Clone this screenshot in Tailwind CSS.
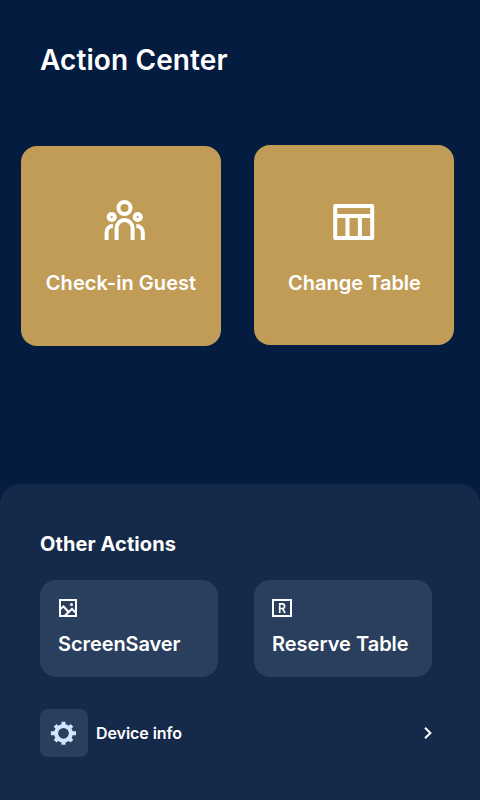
<!DOCTYPE html>
<html lang="en">
<head>
<meta charset="utf-8">
<title>Action Center</title>
<script src="https://cdn.jsdelivr.net/npm/@tailwindcss/browser@4"></script>
</head>
<body class="bg-[#031c40] font-['Inter',sans-serif] text-white">
<main class="flex h-[800px] w-[480px] flex-col overflow-hidden">
  <h1 class="mt-[43px] ml-10 text-[28px] leading-[34px] font-semibold tracking-[0.1px] whitespace-nowrap">Action Center</h1>
  <div class="mt-[68px] flex items-start gap-[33px] pl-[21px]">
    <button class="mt-px flex size-[200px] flex-col items-center rounded-2xl bg-[#c19c57] pt-[54px]">
      <svg class="ml-[7px] h-10 w-[41px]" viewBox="0 0 41 40" fill="none" stroke="#fff" stroke-width="4">
        <circle cx="20.5" cy="8" r="6"/><circle cx="7.7" cy="17" r="3.1"/><circle cx="33.7" cy="17" r="3.1"/>
        <path d="M12.6 40V28a8 8 0 0 1 16 0v12M2.6 40v-7.5c0-3.8 2.6-6.5 6.3-6.5M38.8 40v-7.5c0-3.8-2.8-6.5-6.5-6.5"/>
      </svg>
      <span class="mt-[31px] text-xl leading-6 font-semibold tracking-[0.05px] whitespace-nowrap">Check-in Guest</span>
    </button>
    <button class="flex size-[200px] flex-col items-center rounded-2xl bg-[#c19c57] pt-[59px]">
      <svg class="h-9 w-[42px]" viewBox="0 0 42 36" fill="none" stroke="#fff" stroke-width="4" stroke-linejoin="round">
        <path d="M2.2 2h37v32h-37zM2 12h37M14.5 12v22M26.9 12v22"/>
      </svg>
      <span class="mt-[31px] ml-px text-xl leading-6 font-semibold whitespace-nowrap">Change Table</span>
    </button>
  </div>
  <section class="mt-[138px] flex flex-1 flex-col rounded-t-[20px] bg-[#152a4a] px-10 pt-12">
    <h2 class="text-xl leading-6 font-bold tracking-[0.08px]">Other Actions</h2>
    <div class="mt-6 flex gap-9">
      <button class="flex h-[97px] w-[178px] flex-col items-start rounded-2xl bg-[#2a3f5e] pt-[19px] pl-[18px]">
        <svg class="ml-px size-[18px]" viewBox="0 0 18 18" fill="none" stroke="#fff" stroke-width="2">
          <path d="M1 1h16v16H1zM1.5 10 4.5 7.5l5.5 6M6 16.5l7-6.5 4 4"/><circle cx="12.5" cy="5.5" r="1.5" fill="#fff" stroke="none"/>
        </svg>
        <span class="mt-[15px] text-xl leading-6 font-semibold tracking-[-0.08px]">ScreenSaver</span>
      </button>
      <button class="flex h-[97px] w-[178px] flex-col items-start rounded-2xl bg-[#2a3f5e] pt-[19px] pl-[18px]">
        <svg class="h-[18px] w-5" viewBox="0 0 20 18" fill="none" stroke="#fff" stroke-width="2">
          <path d="M1 1h18v16H1z"/><path d="M7.7 14V4.9h2.6a2.3 2.3 0 0 1 0 4.6H7.7M10.5 9.5l2.6 4.5" stroke-width="1.6"/>
        </svg>
        <span class="mt-[15px] text-xl leading-6 font-semibold whitespace-nowrap">Reserve Table</span>
      </button>
    </div>
    <button class="mt-8 flex h-12 items-center pr-2 text-left">
      <span class="flex size-12 items-center justify-center rounded-lg bg-[#2a3f5e]">
        <svg class="mr-0.5 h-6 w-[26px]" viewBox="-13.5 -12.3 26 24" fill="none" stroke="#d0e8ff">
          <circle r="7.4" stroke-width="4"/>
          <path d="M0-11.5v3.5M0 11.5V8M-12.6 0H-8M12.5 0H8M-8.4-7.9l2 2M8.4 7.9l-2-2M-8.4 7.9l2-2M8.4-7.9l-2 2" stroke-width="4"/>
        </svg>
      </span>
      <span class="ml-2 flex-1 text-base leading-5 font-semibold tracking-[-0.06px]">Device info</span>
      <svg class="h-3 w-2" viewBox="0 0 8 12" fill="none" stroke="#fff" stroke-width="2"><path d="m1 .8 5.4 5.2L1 11.2"/></svg>
    </button>
  </section>
</main>
</body>
</html>
